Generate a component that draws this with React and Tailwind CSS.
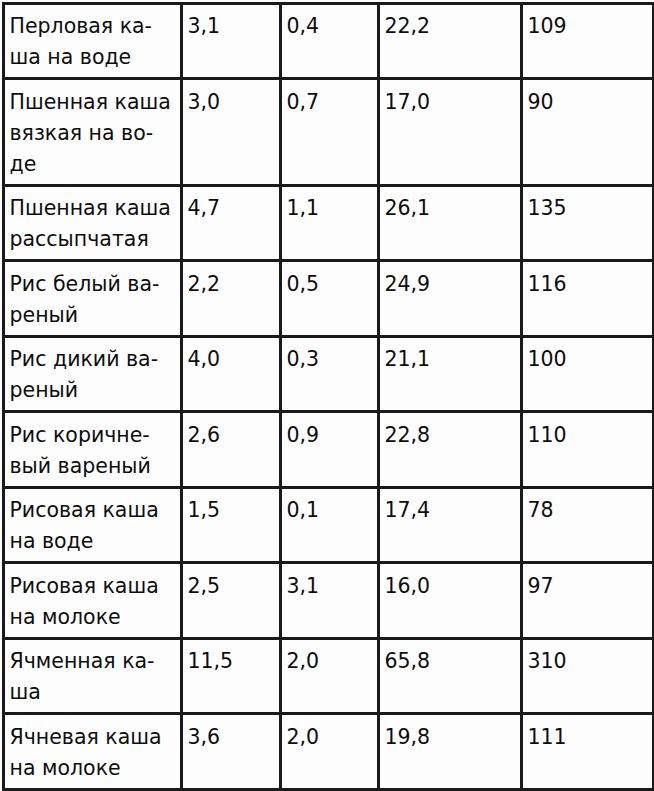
import React from "react";

const rows = [
  [["Перловая ка-", "ша на воде"], "3,1", "0,4", "22,2", "109"],
  [["Пшенная каша", "вязкая на во-", "де"], "3,0", "0,7", "17,0", "90"],
  [["Пшенная каша", "рассыпчатая"], "4,7", "1,1", "26,1", "135"],
  [["Рис белый ва-", "реный"], "2,2", "0,5", "24,9", "116"],
  [["Рис дикий ва-", "реный"], "4,0", "0,3", "21,1", "100"],
  [["Рис коричне-", "вый вареный"], "2,6", "0,9", "22,8", "110"],
  [["Рисовая каша", "на воде"], "1,5", "0,1", "17,4", "78"],
  [["Рисовая каша", "на молоке"], "2,5", "3,1", "16,0", "97"],
  [["Ячменная ка-", "ша"], "11,5", "2,0", "65,8", "310"],
  [["Ячневая каша", "на молоке"], "3,6", "2,0", "19,8", "111"],
];

export default function App() {
  return (
    <div className="w-[654px] h-[791px] bg-[#fdfdfd] overflow-hidden pt-[1.5px] pl-[1.5px]">
      <table
        className="table-fixed border-collapse w-[650px] text-[#0d0d0d] text-[20.5px] leading-[31px]"
        style={{ fontFamily: '"DejaVu Sans", Verdana, sans-serif' }}
      >
        <colgroup>
          <col className="w-[178px]" />
          <col className="w-[99px]" />
          <col className="w-[98px]" />
          <col className="w-[143px]" />
          <col className="w-[132px]" />
        </colgroup>
        <tbody>
          {rows.map((r, i) => (
            <tr key={i}>
              <td className="border-[3px] border-[#1a1a1a] align-top pl-[5px] pr-[2px] pt-[6.5px] pb-[4px] whitespace-nowrap">
                {r[0].map((l, j) => (
                  <div key={j}>{l}</div>
                ))}
              </td>
              {r.slice(1).map((v, j) => (
                <td key={j} className="border-[3px] border-[#1a1a1a] align-top pl-[5px] pt-[6.5px] pb-[4px]">
                  {v}
                </td>
              ))}
            </tr>
          ))}
        </tbody>
      </table>
    </div>
  );
}
